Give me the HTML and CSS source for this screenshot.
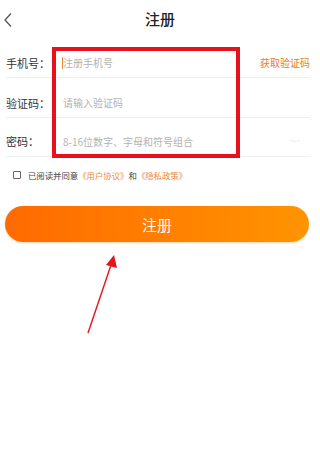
FILE: index.html
```html
<!DOCTYPE html>
<html lang="zh">
<head>
<meta charset="utf-8">
<title>注册</title>
<link rel="stylesheet" href="styles.css">
</head>
<body>
<div class="page">
  <header class="topbar">
    <span class="back">
      <svg width="10" height="16" viewBox="0 0 10 16"><path d="M8 1.5 L2 8 L8 14.5" fill="none" stroke="#555" stroke-width="1.3"/></svg>
    </span>
    <h1 class="title">注册</h1>
    <span class="spacer"></span>
  </header>

  <div class="form">
    <div class="row">
      <span class="label">手机号：</span>
      <span class="input"><span class="cursor"></span>注册手机号</span>
      <span class="action">获取验证码</span>
    </div>
    <div class="row">
      <span class="label">验证码：</span>
      <span class="input">请输入验证码</span>
    </div>
    <div class="row">
      <span class="label">密码：</span>
      <span class="input">8-16位数字、字母和符号组合</span>
      <span class="eye">
        <svg width="12" height="6" viewBox="0 0 12 6"><path d="M1 1.5 Q6 5.5 11 1.5" fill="none" stroke="#e4e4e4" stroke-width="0.8"/></svg>
      </span>
    </div>
  </div>

  <div class="agree">
    <span class="check"></span>
    <span class="agree-text">已阅读并同意<span class="link">《用户协议》</span>和<span class="link">《隐私政策》</span></span>
  </div>

  <button class="submit">注册</button>

  <div class="highlight"></div>
  <svg class="arrow" width="320" height="449" viewBox="0 0 320 449">
    <line x1="88" y1="333" x2="111" y2="265" stroke="#e3141c" stroke-width="1.4"/>
    <polygon points="114,255 117,268 106,265" fill="#e3141c"/>
  </svg>
</div>
</body>
</html>
```

FILE: styles.css
```css
* { box-sizing: border-box; }
html, body { margin: 0; padding: 0; background: #fff; }
body {
  font-family: "Noto Sans CJK SC", "Noto Sans", sans-serif;
  color: #333;
}
.page {
  position: relative;
  width: 320px;
  height: 449px;
  overflow: hidden;
}
.topbar {
  height: 38px;
  display: grid;
  grid-template-columns: 40px 1fr 40px;
  align-items: center;
}
.back {
  padding-left: 3px;
  padding-top: 2px;
  display: flex;
  align-items: center;
}
.title {
  margin: 0;
  text-align: center;
  font-size: 15px;
  font-weight: 500;
  color: #222;
  line-height: 20px;
}
.form {
  margin: 0 10px 0 6px;
}
.row {
  height: 40px;
  padding-top: 10px;
  border-bottom: 1px solid #efefef;
  display: flex;
  align-items: center;
}
.row:last-child { height: 39px; padding-top: 8px; }
.label {
  width: 57px;
  font-size: 11px;
  color: #333;
  flex: none;
}
.input {
  flex: 1;
  font-size: 10px;
  color: #b3b3b3;
  display: flex;
  align-items: center;
}
.cursor {
  display: inline-block;
  width: 1px;
  height: 12px;
  background: #e88a3a;
  margin-left: -1px;
}
.action {
  font-size: 10px;
  color: #ec7a2a;
}
.eye {
  width: 24px;
  display: flex;
  justify-content: center;
  padding-right: 6px;
}
.agree {
  display: flex;
  align-items: center;
  padding: 10px 0 0 13px;
  height: 26px;
}
.check {
  width: 8px;
  height: 8px;
  border: 1px solid #666;
  border-radius: 1px;
  margin-right: 7px;
  flex: none;
}
.agree-text {
  font-size: 8.4px;
  color: #444;
  line-height: 16px;
}
.link { color: #ec8a3a; }
.submit {
  display: block;
  margin: 23px 11px 0 5px;
  width: 304px;
  height: 36px;
  border: none;
  border-radius: 18px;
  background: linear-gradient(90deg, #ff6a00, #ff9400);
  box-shadow: 0 1px 2px rgba(255, 150, 60, 0.4);
  color: #fff;
  font-family: "Noto Sans CJK SC", sans-serif;
  font-size: 15px;
  font-weight: 400;
  padding: 0;
}
.highlight {
  position: absolute;
  left: 52px;
  top: 47px;
  width: 188px;
  height: 111px;
  border: 4px solid #e8101c;
  pointer-events: none;
}
.arrow {
  position: absolute;
  left: 0;
  top: 0;
  pointer-events: none;
}
```
